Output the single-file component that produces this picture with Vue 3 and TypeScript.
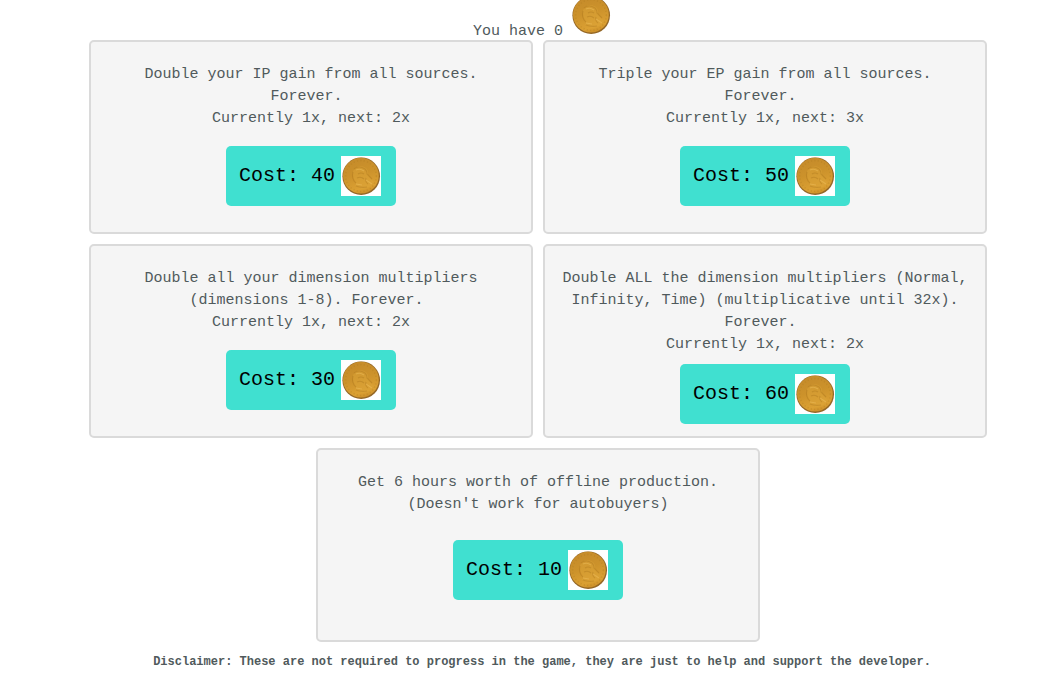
<script setup lang="ts">
import { ref, defineComponent, h } from 'vue'

interface Offer {
  id: string
  lines: string[]
  cost: number
}

const balance = ref<number>(0)

const offers: Offer[] = [
  { id: 'ip', lines: ['Double your IP gain from all sources. Forever.\u00a0', 'Currently 1x, next: 2x'], cost: 40 },
  { id: 'ep', lines: ['Triple your EP gain from all sources. Forever.\u00a0', 'Currently 1x, next: 3x'], cost: 50 },
  { id: 'dims', lines: ['Double all your dimension multipliers (dimensions 1-8). Forever.\u00a0', 'Currently 1x, next: 2x'], cost: 30 },
  { id: 'alldims', lines: ['Double ALL the dimension multipliers (Normal, Infinity, Time) (multiplicative until 32x). Forever.\u00a0', 'Currently 1x, next: 2x'], cost: 60 },
  { id: 'offline', lines: ['Get 6 hours worth of offline production.', "(Doesn't work for autobuyers)"], cost: 10 },
]

function buy(offer: Offer): void {
  if (balance.value >= offer.cost) balance.value -= offer.cost
}

const Coin = defineComponent({
  setup() {
    return () =>
      h('svg', { viewBox: '0 0 40 40', width: 40, height: 40, 'aria-hidden': 'true' }, [
        h('circle', { cx: 20.2, cy: 20.2, r: 18.8, fill: '#946726' }),
        h('circle', { cx: 19.9, cy: 19.7, r: 17.9, fill: 'url(#coin-gold)' }),
        h('circle', { cx: 20, cy: 20, r: 15.4, fill: 'none', stroke: '#a8761f', 'stroke-width': 1.5, 'stroke-dasharray': '1.2 2.2', opacity: 0.3 }),
        h('path', { d: 'M14 12 Q19 8 25 12 Q28 15 27 19 L31 24 L33 26 Q29 32 22 33 L14 30 Q16 27 13 23 Q10 17 14 12Z', fill: '#dca338', opacity: 0.5 }),
        h('path', { d: 'M13 13 Q18 9 24 13 Q26 15 26 18 L31 23 M12 16 Q10 23 15 27 M17 18 Q20 16 23 18 M16 22 Q20 20 23 23 M25 22 Q24 26 27 28 M15 30 Q20 32 26 31', fill: 'none', stroke: '#a8741c', 'stroke-width': 1.1, opacity: 0.38 }),
        h('path', { d: 'M15 14 Q19 12 23 15 M25 24 L31 28 M15 28 L21 29', fill: 'none', stroke: '#edbd5b', 'stroke-width': 1.1, opacity: 0.5 }),
      ])
  },
})
</script>

<template>
  <main class="shop">
    <svg class="defs" width="0" height="0" aria-hidden="true">
      <defs>
        <linearGradient id="coin-gold" x1="0.3" y1="0" x2="0.6" y2="1">
          <stop offset="0" stop-color="#c58b2b" />
          <stop offset="0.45" stop-color="#cc922b" />
          <stop offset="0.85" stop-color="#dba033" />
          <stop offset="1" stop-color="#cc8f29" />
        </linearGradient>
      </defs>
    </svg>
    <header class="balance">
      <span>You have {{ balance }}</span>
      <Coin />
    </header>
    <section class="offers">
      <article v-for="offer in offers" :key="offer.id" class="offer">
        <p class="text">
          <span v-for="line in offer.lines" :key="line" class="line">{{ line }}</span>
        </p>
        <button type="button" class="buy" @click="buy(offer)">
          <span>Cost: {{ offer.cost }}</span>
          <span class="coin-box"><Coin /></span>
        </button>
      </article>
    </section>
    <p class="disclaimer">
      Disclaimer: These are not required to progress in the game, they are just to help and support the developer.
    </p>
  </main>
</template>

<style>
body {
  margin: 0;
  background: #fff;
}
</style>

<style scoped>
.shop {
  display: flex;
  flex-direction: column;
  align-items: center;
  padding-left: 39px;
  font-family: "Liberation Mono", monospace;
  font-size: 15px;
  line-height: 22px;
  color: #505a5c;
}
.defs {
  position: absolute;
}
.balance {
  display: flex;
  align-items: baseline;
  gap: 8px;
  height: 45px;
  margin-top: -5px;
  padding-left: 8px;
}
.offers {
  display: flex;
  flex-wrap: wrap;
  justify-content: center;
  gap: 10px;
  width: 100%;
  max-width: 900px;
}
.offer {
  box-sizing: border-box;
  display: flex;
  flex-direction: column;
  align-items: center;
  flex: 0 1 444px;
  min-height: 194px;
  padding: 22px 16px 0;
  border: 2px solid #dadada;
  border-radius: 5px;
  background: #f5f5f5;
  text-align: center;
}
.offer::after {
  content: "";
  flex: 7 0 12px;
}
.text {
  flex: 4 0 auto;
  margin: 0;
  padding-bottom: 8px;
}
.line {
  display: block;
}
.buy {
  display: flex;
  align-items: center;
  flex: none;
  gap: 6px;
  padding: 10px 15px 10px 13px;
  border: 0;
  border-radius: 5px;
  background: #40e0d0;
  color: #000;
  font-family: inherit;
  font-size: 20px;
  line-height: 24px;
  cursor: pointer;
}
.coin-box {
  display: flex;
  background: #fff;
}
.disclaimer {
  margin: 11px 0 0;
  padding-left: 8px;
  font-size: 12px;
  font-weight: bold;
  line-height: 18px;
  text-align: center;
}
</style>
